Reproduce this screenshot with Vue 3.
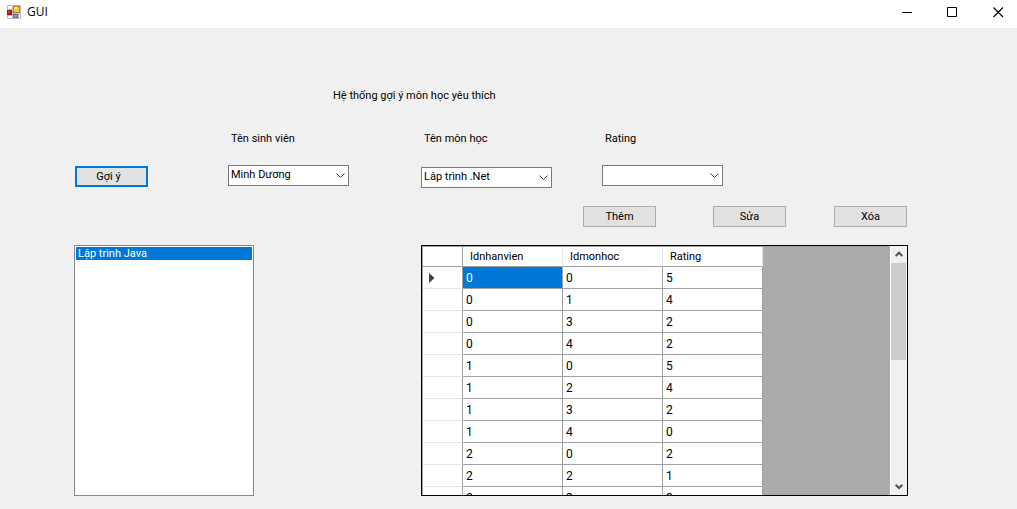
<script setup>
import { ref } from 'vue'

const students = ['Minh Dương']
const subjects = ['Lâp trình .Net']
const ratings = ['0', '1', '2', '3', '4', '5']
const suggestions = ['Lập trình Java']

const student = ref(students[0])
const subject = ref(subjects[0])
const rating = ref('')
const suggestion = ref(suggestions[0])

const rows = [
  [0, 0, 5],
  [0, 1, 4],
  [0, 3, 2],
  [0, 4, 2],
  [1, 0, 5],
  [1, 2, 4],
  [1, 3, 2],
  [1, 4, 0],
  [2, 0, 2],
  [2, 2, 1],
  [2, 3, 3]
]
const current = ref({ row: 0, col: 0 })
</script>

<template>
  <div class="window">
    <header class="titlebar">
      <svg class="app-icon" width="14" height="14" viewBox="0 0 14 14" aria-hidden="true">
        <rect width="14" height="14" fill="#bdbdbd" />
        <rect x="1" y="1" width="4" height="3" fill="#fff" />
        <rect x="1" y="11" width="4" height="2" fill="#fff" />
        <rect x="12" y="9" width="1" height="4" fill="#fff" />
        <rect x="0" y="5" width="5" height="5" fill="#a31515" />
        <rect x="1" y="6" width="2" height="2" fill="#e0483c" />
        <rect x="6" y="1" width="7" height="7" fill="#b8860b" />
        <rect x="7" y="2" width="5" height="5" fill="#fbc93a" />
        <rect x="7" y="2" width="3" height="2" fill="#ffe48a" />
        <rect x="6" y="9" width="5" height="4" fill="#3a6fd0" />
        <rect x="7" y="10" width="3" height="2" fill="#76a6f5" />
      </svg>
      <span class="caption">GUI</span>
      <div class="window-buttons">
        <button type="button" aria-label="Minimize">
          <svg width="11" height="11" viewBox="0 0 11 11"><path d="M1 5.5H11" stroke="#000" /></svg>
        </button>
        <button type="button" aria-label="Maximize">
          <svg width="11" height="11" viewBox="0 0 11 11"><path d="M.5 .5H9.5V9.5H.5Z" fill="none" stroke="#000" /></svg>
        </button>
        <button type="button" aria-label="Close">
          <svg width="11" height="11" viewBox="0 0 11 11"><path d="M.5 .5L10 10M10 .5L.5 10" stroke="#000" stroke-width="1.1" /></svg>
        </button>
      </div>
    </header>

    <main class="form">
      <h1 class="heading">Hệ thống gợi ý môn học yêu thích</h1>

      <div class="suggest">
        <button type="button" class="btn primary">Gợi ý</button>
      </div>

      <div class="field">
        <label for="student">Tên sinh viên</label>
        <div class="combo">
          <select id="student" v-model="student">
            <option v-for="s in students" :key="s">{{ s }}</option>
          </select>
          <svg width="9" height="6" viewBox="0 0 9 6"><path d="M.5 .5L4.5 4.5L8.5 .5" /></svg>
        </div>
      </div>

      <div class="fields">
        <div class="field wide">
          <label for="subject">Tên môn học</label>
          <div class="combo">
            <select id="subject" v-model="subject">
              <option v-for="s in subjects" :key="s">{{ s }}</option>
            </select>
            <svg width="9" height="6" viewBox="0 0 9 6"><path d="M.5 .5L4.5 4.5L8.5 .5" /></svg>
          </div>
        </div>
        <div class="field">
          <label for="rating">Rating</label>
          <div class="combo">
            <select id="rating" v-model="rating">
              <option value=""></option>
              <option v-for="r in ratings" :key="r">{{ r }}</option>
            </select>
            <svg width="9" height="6" viewBox="0 0 9 6"><path d="M.5 .5L4.5 4.5L8.5 .5" /></svg>
          </div>
        </div>
      </div>

      <div class="actions">
        <button type="button" class="btn add">Thêm</button>
        <button type="button" class="btn">Sửa</button>
        <button type="button" class="btn">Xóa</button>
      </div>

      <select v-model="suggestion" class="listbox" size="18" aria-label="Gợi ý">
        <option v-for="s in suggestions" :key="s">{{ s }}</option>
      </select>

      <div class="datagrid">
        <div class="viewport">
          <table>
            <thead>
              <tr>
                <th class="marker"></th>
                <th>Idnhanvien</th>
                <th>Idmonhoc</th>
                <th>Rating</th>
              </tr>
            </thead>
            <tbody>
              <tr v-for="(row, r) in rows" :key="r">
                <th class="marker">
                  <svg v-if="r === current.row" width="6" height="10" viewBox="0 0 6 10"><path d="M0 0L5.5 5L0 10Z" fill="#404040" /></svg>
                </th>
                <td
                  v-for="(value, c) in row"
                  :key="c"
                  :class="{ current: r === current.row && c === current.col }"
                  @click="current = { row: r, col: c }"
                >{{ value }}</td>
              </tr>
            </tbody>
          </table>
        </div>
        <div class="scrollbar" aria-hidden="true">
          <div class="arrow">
            <svg width="8" height="7" viewBox="0 0 8 7"><path d="M.7 5L4 1.7L7.3 5" /></svg>
          </div>
          <div class="track"><div class="thumb"></div></div>
          <div class="arrow">
            <svg width="8" height="7" viewBox="0 0 8 7"><path d="M.7 1.7L4 5L7.3 1.7" /></svg>
          </div>
        </div>
      </div>
    </main>
  </div>
</template>

<style>
body {
  background: #f0f0f0;
}
</style>

<style scoped>
.window {
  display: flex;
  flex-direction: column;
  height: 100vh;
  background: #f0f0f0;
  color: #000;
  font: 11px/14px Roboto, "Liberation Sans", Arial, sans-serif;
}

.window * {
  box-sizing: border-box;
}

button,
select {
  margin: 0;
  color: inherit;
  font: inherit;
}

.titlebar {
  display: flex;
  flex: none;
  align-items: center;
  height: 28px;
  padding: 0 9px 4px 7px;
  background: #fff;
}

.caption {
  margin-left: 6px;
  font: 12px/16px "Open Sans", "Noto Sans", sans-serif;
}

.window-buttons {
  display: flex;
  gap: 26px;
  margin-left: auto;
}

.window-buttons button {
  display: grid;
  place-items: center;
  width: 20px;
  height: 20px;
  padding: 0;
  border: 0;
  background: none;
}

.form {
  display: grid;
  flex: 1;
  grid-template-columns: 154px 193px 1fr;
  grid-template-rows: 14px auto 21px minmax(0, 1fr);
  min-height: 0;
  padding: 61px 109px 13px 74px;
}

.heading {
  grid-column: 1 / -1;
  margin: 0;
  padding-left: 259px;
  font-size: 11px;
  font-weight: 400;
}

.suggest {
  display: flex;
  align-items: flex-end;
  padding: 0 1px 1px;
}

.suggest,
.field {
  margin-top: 29px;
}

.field {
  width: 121px;
}

.field label {
  display: block;
  margin-bottom: 19px;
  padding-left: 3px;
}

.field.wide {
  width: 131px;
}

.field.wide label {
  margin-bottom: 21px;
}

.fields {
  display: flex;
  gap: 50px;
}

.combo {
  position: relative;
}

.combo select {
  display: block;
  width: 100%;
  height: 21px;
  padding: 0 20px 2px 2px;
  border: 1px solid #7a7a7a;
  border-radius: 0;
  background: #fff;
  appearance: none;
}

.combo svg {
  position: absolute;
  top: 8px;
  right: 4px;
  fill: none;
  stroke: #404040;
  pointer-events: none;
}

.btn {
  width: 73px;
  height: 21px;
  padding: 0;
  border: 1px solid #adadad;
  background: #e1e1e1;
  text-align: center;
}

.btn.primary {
  padding-right: 6px;
  border: 2px solid #0078d7;
}

.actions {
  display: flex;
  grid-column: 3;
  gap: 48px;
  justify-content: flex-end;
  margin: 18px 1px -18px 0;
}

.add {
  margin-right: 9px;
}

.listbox {
  grid-column: 1 / 3;
  width: 180px;
  height: auto;
  margin-top: 36px;
  padding: 1px;
  overflow: hidden;
  border: 1px solid #828790;
  border-radius: 0;
  background: #fff;
}

.listbox option {
  height: 13px;
  min-height: 13px;
  padding: 0 2px;
  line-height: 13px;
}

.listbox option:checked {
  background: #0078d7 linear-gradient(#0078d7, #0078d7);
  -webkit-text-fill-color: #fff;
}

.datagrid {
  display: flex;
  margin-top: 36px;
  border: 1px solid #000;
  background: #ababab;
}

.viewport {
  flex: 1;
  overflow: hidden;
  border-top: 1px solid #a0a0a0;
  border-left: 1px solid #a0a0a0;
}

table {
  width: 340px;
  border-spacing: 0;
  background: #fff;
  table-layout: fixed;
}

th,
td {
  height: 22px;
  padding: 0 3px;
  border-right: 1px solid #a0a0a0;
  border-bottom: 1px solid #a0a0a0;
  font-weight: 400;
  text-align: left;
}

td {
  font-size: 12px;
}

thead th {
  height: 20px;
  padding: 0 7px;
  border-right-color: #e5e5e5;
}

.marker,
thead .marker {
  width: 40px;
  padding: 0 6px;
  border-right-color: #a0a0a0;
}

tbody .marker {
  border-bottom-color: #e5e5e5;
}

.marker svg {
  display: block;
}

.current {
  background: #0078d7;
  color: #fff;
}

.scrollbar {
  display: flex;
  flex: none;
  flex-direction: column;
  width: 17px;
  border-left: 1px solid #fff;
  background: #f0f0f0;
}

.arrow {
  display: grid;
  place-items: center;
  height: 17px;
}

.arrow svg {
  fill: none;
  stroke: #505050;
  stroke-width: 2;
}

.track {
  flex: 1;
  padding-right: 1px;
}

.thumb {
  height: 45%;
  background: #cdcdcd;
}
</style>
